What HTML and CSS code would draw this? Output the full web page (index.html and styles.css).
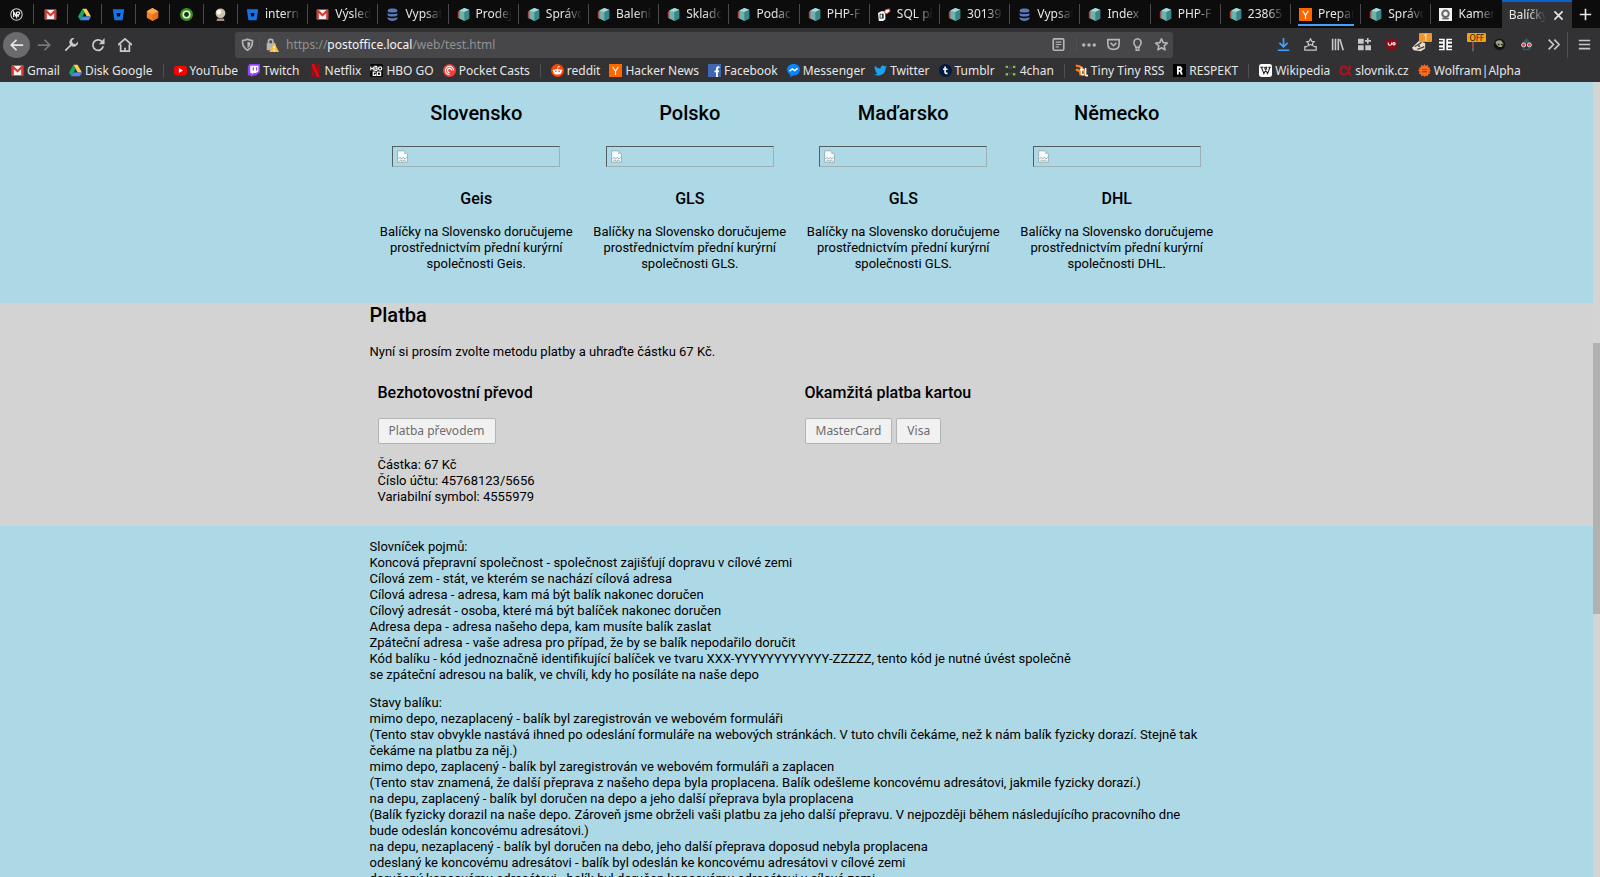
FILE: index.html
```
<!DOCTYPE html>
<html lang="cs">
<head>
<meta charset="utf-8">
<title>Balíčky</title>
<link rel="stylesheet" href="styles.css">
</head>
<body>
<svg class="sprite" aria-hidden="true">
  <symbol id="gmail" viewBox="0 0 16 16"><path fill="#f2f2f2" d="M1 2h14v12H1z"/><path fill="#d93a30" d="M1 2h2l5 5 5-5h2v12h-2.500V6.500L8 10.500l-4.500-4V14H1z"/></symbol>
  <symbol id="drive" viewBox="0 0 16 16"><path fill="#16a765" d="M5.500 1L0 10.500 2.700 15l5.300-9z"/><path fill="#ffcf48" d="M5.500 1h5L16 10.500h-5.200z"/><path fill="#4688f4" d="M5.400 10.500H16L13.400 15H2.700z"/></symbol>
  <symbol id="bucket" viewBox="0 0 16 16"><path fill="#1673e6" fill-rule="evenodd" d="M1 1.500h14L13 15H3zM5.500 6l.8 4.500h3.400l.8-4.500z"/></symbol>
  <symbol id="hex" viewBox="0 0 16 16"><path fill="#f58220" d="M8 0l7 4v8l-7 4-7-4V4z"/><path fill="#ffab4d" d="M8 0l7 4-7 4-7-4z"/><path fill="#e8701a" d="M8 8l7-4v8l-7 4z"/></symbol>
  <symbol id="ring" viewBox="0 0 16 16"><circle cx="8" cy="8" r="8" fill="#3d8f22"/><circle cx="8" cy="8" r="4" fill="#123312" stroke="#e6f5dc" stroke-width="2"/></symbol>
  <symbol id="globe" viewBox="0 0 16 16"><circle cx="8" cy="6.500" r="6" fill="#c9c3ae"/><circle cx="6" cy="5" r="3" fill="#fffdf0"/><path fill="#9b927c" d="M4 13h8l1 3H3z"/></symbol>
  <symbol id="wp" viewBox="0 0 16 16"><circle cx="8" cy="8" r="7" fill="none" stroke="#d6d6d6" stroke-width="1.300"/><path d="M4.500 11V5l3.500 6V5M8 5h3q2 2-1 3.500H8l3 2" fill="none" stroke="#eee" stroke-width="1.600"/></symbol>
  <symbol id="db" viewBox="0 0 16 16"><g fill="#5b79b8"><path d="M2 3c0-3 12-3 12 0v1c0 2-12 2-12 0z"/><path d="M2 6c2 2 10 2 12 0v3c-1 2-11 2-12 0z"/><path d="M2 11c2 2 10 2 12 0v2c-1 4-11 4-12 0z"/></g></symbol>
  <symbol id="box" viewBox="0 0 16 16"><path fill="#b8483e" d="M1 5l3-3v12l-3-2z"/><path fill="#6fb3b0" d="M3 3l6-3 6 2v11l-6 3-6-3z"/><path fill="#a9dbd6" d="M3 3l6-3 6 2-6 3z"/><path fill="#3a8788" d="M9 5l6-3v11l-6 3z"/></symbol>
  <symbol id="sql" viewBox="0 0 16 16"><path fill="#fff" d="M0 6l4-2h5v10l-3 2H1z"/><path fill="#27333b" d="M2 7h5v6H2z"/><path fill="#d7f1ff" d="M3 8h2v4H3z"/><path fill="#fff" stroke="#c83232" d="M9 2l5-1 1 3-4 3-3-1z"/></symbol>
  <symbol id="hn" viewBox="0 0 16 16"><path fill="#ff6600" d="M0 0h16v16H0z"/><path d="M4.500 3.500L8 9l3.500-5.500M8 9v4.500" fill="none" stroke="#fff" stroke-width="1.400"/></symbol>
  <symbol id="cam" viewBox="0 0 16 16"><path fill="#f4f4f4" d="M0 0h16v16H0z"/><circle cx="8" cy="7" r="4" fill="none" stroke="#666" stroke-width="2.500"/><path fill="#666" d="M4 12h8v2H4z"/></symbol>
  <symbol id="yt" viewBox="0 0 16 16"><rect y="2" width="16" height="12" rx="4" fill="#f00"/><path fill="#fff" d="M6 5l5 3-5 3z"/></symbol>
  <symbol id="twitch" viewBox="0 0 16 16"><path fill="#9146ff" d="M3 0h13v10l-5 4H8l-3 2v-2H1V3z"/><path fill="#fff" d="M4 2h10v7l-3 2H8l-2 2v-2H4z"/><path fill="#9146ff" d="M7 4h1.500v4H7zM11 4h1.500v4H11z"/></symbol>
  <symbol id="netflix" viewBox="0 0 16 16"><path fill="#a90a13" d="M3 0h3.500v16H3zM9.500 0H13v16H9.500z"/><path fill="#e50914" d="M3 0h3.500L13 16H9.500z"/></symbol>
  <symbol id="hbo" viewBox="0 0 16 16"><rect width="16" height="16" rx="2" fill="#090909"/><path d="M1 3v5M4 3v5M1 5.500h3M6 3v5h2q2-1 0-2.500Q9.500 4 8 3z" fill="none" stroke="#fff" stroke-width="1.400"/><circle cx="12.500" cy="5.500" r="2" fill="none" stroke="#fff" stroke-width="1.500"/><path d="M7 10H4v4h3v-2M9 10h4v4H9z" fill="none" stroke="#fff" stroke-width="1.500"/></symbol>
  <symbol id="casts" viewBox="0 0 16 16"><circle cx="8" cy="8" r="8" fill="#f43e37"/><path d="M8 13a5 5 0 1 1 5-5M8 10.500A2.500 2.500 0 1 1 10.500 8" fill="none" stroke="#fff" stroke-width="1.600"/></symbol>
  <symbol id="reddit" viewBox="0 0 16 16"><circle cx="8" cy="8" r="8" fill="#ff4500"/><ellipse cx="8" cy="9.500" rx="5" ry="3.500" fill="#fff"/><circle cx="3.500" cy="8" r="1.300" fill="#fff"/><circle cx="12.500" cy="8" r="1.300" fill="#fff"/><path d="M8 6l1-3 2 .5" fill="none" stroke="#fff"/><circle cx="6" cy="9" r="1" fill="#ff4500"/><circle cx="10" cy="9" r="1" fill="#ff4500"/></symbol>
  <symbol id="fb" viewBox="0 0 16 16"><path fill="#4267b2" d="M0 0h16v16H0z"/><path d="M14 4h-1.500Q11 4 11 6v10M8 9h5.500" fill="none" stroke="#fff" stroke-width="2.300"/></symbol>
  <symbol id="msgr" viewBox="0 0 16 16"><path fill="#0a84ff" d="M8 0c11 0 10 14 0 14l-4 2v-3C-3 9 0 0 8 0z"/><path d="M3 9l3.500-3 3 2L13 5.500" fill="none" stroke="#fff" stroke-width="1.800"/></symbol>
  <symbol id="twitter" viewBox="0 0 16 16"><path fill="#1da1f2" d="M1 2q3 3.500 7 3.500C8 1 12 1 13.500 3L16 2.500 14.500 5C14 14 5 16 0 13q3 0 4.500-1.500Q2 11 1.500 9H3Q0 7 1 2z"/></symbol>
  <symbol id="tumblr" viewBox="0 0 16 16"><circle cx="8" cy="8" r="8" fill="#001b3d"/><path d="M7.500 3v7q0 2 3 1.500M5 6.500h5.500" fill="none" stroke="#fff" stroke-width="2"/></symbol>
  <symbol id="chan" viewBox="0 0 16 16"><g fill="#75c52d"><path d="M2 2h3v3H2zM11 2h3v3h-3zM2 11h3v3H2zM11 11h3v3h-3z"/></g><path fill="#39761a" d="M6 3h1v3H6zM9 3h1v3H9zM6 10h1v3H6zM9 10h1v3H9z"/></symbol>
  <symbol id="rss" viewBox="0 0 16 16"><path d="M1 2q10 0 11 12M1 7q6 0 6 7" fill="none" stroke="#ff7b16" stroke-width="3"/><path d="M8 4v7q0 3 3 2M6 7h5M13 5v8q0 2 3 1" fill="none" stroke="#fff" stroke-width="2"/></symbol>
  <symbol id="respekt" viewBox="0 0 16 16"><path fill="#000" d="M0 0h16v16H0z"/><path d="M6 13V4h3q3 2 0 4.500H6M9 8l2 5" fill="none" stroke="#fff" stroke-width="2.200"/></symbol>
  <symbol id="wiki" viewBox="0 0 16 16"><rect width="16" height="16" rx="3" fill="#fff"/><path d="M1.500 4h4M7 4h3M11.500 4h3M3 4l3 8 4-8M6.500 4l4 8L13.500 4" fill="none" stroke="#222" stroke-width="1.300"/></symbol>
  <symbol id="alpha" viewBox="0 0 16 16"><path d="M14 2q-2 11-8 11-4 0-4-5t4-5q5 0 7 10h2" fill="none" stroke="#b3101c" stroke-width="2.600"/></symbol>
  <symbol id="wolfram" viewBox="0 0 16 16"><path fill="#f96a1a" d="M8 0l1.500 2.500L12 1l.5 3L15 4.500 14 7l2 1-2 1.500 1 2.500-2.500.5L12 15l-2.500-1L8 16l-1.500-2L4 15l-.5-2.500L1 12l1-2.500L0 8l2-1.500L1 4.500 3.500 4 4 1l2.500 1.500z"/><path fill="#8a3a10" d="M5 6h6v1H5zM5 9h6v1H5z"/></symbol>
  <symbol id="back" viewBox="0 0 16 16"><path d="M15 8H2M7.500 2L1.500 8l6 6"/></symbol>
  <symbol id="forward" viewBox="0 0 16 16"><path d="M1 8h13M8.500 2l6 6-6 6"/></symbol>
  <symbol id="wrench" viewBox="0 0 16 16"><path d="M1.500 14.500L9 7"/><path fill="currentColor" stroke="none" d="M12 0a5 5 0 1 0 4 4l-3 3-3-1-1-3z"/></symbol>
  <symbol id="reload" viewBox="0 0 16 16"><path d="M13 4.500A6 6 0 1 0 14 9.500"/><path fill="currentColor" stroke="none" d="M15.500 0v7H9z"/></symbol>
  <symbol id="home" viewBox="0 0 16 16"><path d="M0 8l8-7 8 7M3 7v8h10V7M8 15v-4"/></symbol>
  <symbol id="shield" viewBox="0 0 16 16"><path d="M8 1.500q3 1.500 6 1.500 1 8-6 12Q1 11 2 3q3 0 6-1.500z"/><path fill="currentColor" stroke="none" d="M8 4.500l3.500 1Q12 10 8 12.500z"/></symbol>
  <symbol id="lock" viewBox="0 0 16 16"><path d="M4 7V4q0-2.500 2.500-2.500T9 4v3"/><path fill="currentColor" stroke="none" d="M2 6h10v8H2z"/><path fill="#ffbf26" stroke="none" d="M10.500 5L16 16H5z"/><path stroke="#fff" stroke-width="1.500" d="M10.500 9v3M10.500 13.500V15"/></symbol>
  <symbol id="reader" viewBox="0 0 16 16"><rect x="1.500" y="1" width="13" height="14" rx="1.500"/><path stroke-width="1.500" d="M4.500 5h7M4.500 8h7M4.500 11h4"/></symbol>
  <symbol id="dots" viewBox="0 0 16 16"><g fill="currentColor" stroke="none"><circle cx="2" cy="8" r="2"/><circle cx="8" cy="8" r="2"/><circle cx="14" cy="8" r="2"/></g></symbol>
  <symbol id="pocket" viewBox="0 0 16 16"><path d="M1 2h14v5q0 7-7 7T1 7zM4.500 6L8 9.500 11.500 6"/></symbol>
  <symbol id="bulb" viewBox="0 0 16 16"><path d="M6 11.500q0-1.500-2-3.500-1.500-6.500 4-7 5.500.5 4 7-2 2-2 3.500zM6.500 13v2.500h3V13"/></symbol>
  <symbol id="star" viewBox="0 0 16 16"><path stroke-linejoin="round" d="M8 1l2.100 4.700 5 .5-3.800 3.400 1.100 5L8 12l-4.400 2.600 1.100-5L.9 6.200l5-.5z"/></symbol>
  <symbol id="download" viewBox="0 0 16 16"><path d="M8 0v11M3 6l5 5 5-5M1 15h14"/></symbol>
  <symbol id="tray" viewBox="0 0 16 16"><path stroke-width="1.500" d="M8 1l1.500 3 3 .5-2 2 .5 3L8 8l-3 1.500.5-3-2-2 3-.5zM4 10.500H1V15h14v-4.500h-3"/></symbol>
  <symbol id="library" viewBox="0 0 16 16"><path d="M2 1v14M5.500 1v14M9 1v14M11 1.500L15 15"/></symbol>
  <symbol id="tiles" viewBox="0 0 16 16"><path fill="currentColor" stroke="none" d="M0 1h7v6H0zM0 9h7v6H0zM9 9h7v6H9zM11 0h2v2.500h3v2h-3V7h-2V4.500H8.500v-2H11z"/></symbol>
  <symbol id="ublock" viewBox="0 0 16 16"><path fill="#8c0d19" stroke="none" d="M8 0q3 2 7 2v6q-1 5-7 8-6-3-7-8V2Q5 2 8 0z"/><path stroke="#fff" stroke-width="1.300" d="M4 5.500v2q0 1.500 2 1.500T8 7.500v-2"/><circle cx="11" cy="7.200" r="1.500" stroke="#fff" stroke-width="1.300"/></symbol>
  <symbol id="badger" viewBox="0 0 16 16"><path fill="#e8e0d1" stroke="none" d="M0 11l8-8 7 3v6l-5 3-8-1z"/><path stroke="#5a4c42" stroke-width="1.600" d="M3 10l8-5M6 13l8-3"/><circle cx="8" cy="9" r="1" fill="#111" stroke="none"/></symbol>
  <symbol id="grid" viewBox="0 0 16 16"><path fill="#fff" stroke="none" d="M0 1h7v14H0zM9 1h7v14H9z"/><path stroke="#111" stroke-width="1.600" d="M0 3.500h5M0 8h5M0 12.500h5M11 3.500h5M11 8h5M11 12.500h5"/></symbol>
  <symbol id="flag" viewBox="0 0 16 16"><path stroke="#a8483f" d="M8 2v9"/><path stroke="#777" stroke-width="1.500" d="M8 11v4"/></symbol>
  <symbol id="skull" viewBox="0 0 16 16"><circle cx="8" cy="8" r="7.500" fill="#11140e" stroke="#34372b" stroke-width="1"/><path fill="#a3a184" stroke="none" d="M3 6q1-4 7-3l3 4-2 4H7L5 9z"/><path fill="#171913" stroke="none" d="M6 7h2v2H6zM10 7h2v2h-2z"/></symbol>
  <symbol id="spy" viewBox="0 0 16 16"><path fill="#2d5f63" stroke="none" d="M8 0l5 6H3zM2 11q6 5 12 0l-2 4H4z"/><circle cx="4.500" cy="8.500" r="2.500" fill="#e8434c" stroke="#ddd" stroke-width="1.200"/><circle cx="11.500" cy="8.500" r="2.500" fill="#e8434c" stroke="#ddd" stroke-width="1.200"/></symbol>
  <symbol id="more" viewBox="0 0 16 16"><path d="M2 2l6 6-6 6M9 2l6 6-6 6"/></symbol>
  <symbol id="menu" viewBox="0 0 16 16"><path d="M1 3h14M1 8h14M1 13h14"/></symbol>
  <symbol id="close" viewBox="0 0 16 16"><path d="M3 3l10 10M13 3L3 13"/></symbol>
  <symbol id="plus" viewBox="0 0 16 16"><path d="M8 1v14M1 8h14"/></symbol>
  <symbol id="broken" viewBox="0 0 16 16"><path fill="#f7fbfc" stroke="#8fa4aa" d="M2 1h8l4 4v10H2z"/><path fill="#b7c9ce" d="M10 1v4h4z"/><path d="M3 11l2-2 2 2 2-2 2 2 2-2M4 14l2-2 2 2 2-2 2 2" fill="none" stroke="#8a9b9f"/></symbol>
</svg>

<div class="browser">
  <header class="chrome">
    <nav class="tabs" aria-label="Panely">
      <button class="tab pinned" aria-label="WP"><svg class="fav"><use href="#wp"/></svg></button>
      <button class="tab pinned" aria-label="Gmail"><svg class="fav"><use href="#gmail"/></svg></button>
      <button class="tab pinned" aria-label="Disk"><svg class="fav"><use href="#drive"/></svg></button>
      <button class="tab pinned" aria-label="Bitbucket"><svg class="fav"><use href="#bucket"/></svg></button>
      <button class="tab pinned" aria-label="Balík"><svg class="fav"><use href="#hex"/></svg></button>
      <button class="tab pinned" aria-label="Stav"><svg class="fav"><use href="#ring"/></svg></button>
      <button class="tab pinned" aria-label="Glóbus"><svg class="fav"><use href="#globe"/></svg></button>
      <button class="tab"><svg class="fav"><use href="#bucket"/></svg><span class="label">intern</span></button>
      <button class="tab"><svg class="fav"><use href="#gmail"/></svg><span class="label">Výsled</span></button>
      <button class="tab"><svg class="fav"><use href="#db"/></svg><span class="label">Vypsat</span></button>
      <button class="tab"><svg class="fav"><use href="#box"/></svg><span class="label">Prodej</span></button>
      <button class="tab"><svg class="fav"><use href="#box"/></svg><span class="label">Správc</span></button>
      <button class="tab"><svg class="fav"><use href="#box"/></svg><span class="label">Balení</span></button>
      <button class="tab"><svg class="fav"><use href="#box"/></svg><span class="label">Sklado</span></button>
      <button class="tab"><svg class="fav"><use href="#box"/></svg><span class="label">Podac</span></button>
      <button class="tab"><svg class="fav"><use href="#box"/></svg><span class="label">PHP-F</span></button>
      <button class="tab"><svg class="fav"><use href="#sql"/></svg><span class="label">SQL př</span></button>
      <button class="tab"><svg class="fav"><use href="#box"/></svg><span class="label">30139</span></button>
      <button class="tab"><svg class="fav"><use href="#db"/></svg><span class="label">Vypsat</span></button>
      <button class="tab"><svg class="fav"><use href="#box"/></svg><span class="label">Index o</span></button>
      <button class="tab"><svg class="fav"><use href="#box"/></svg><span class="label">PHP-F</span></button>
      <button class="tab"><svg class="fav"><use href="#box"/></svg><span class="label">23865</span></button>
      <button class="tab marked"><svg class="fav"><use href="#hn"/></svg><span class="label">Prepar</span></button>
      <button class="tab"><svg class="fav"><use href="#box"/></svg><span class="label">Správc</span></button>
      <button class="tab last"><svg class="fav"><use href="#cam"/></svg><span class="label">Kamer</span></button>
      <button class="tab active"><span class="label">Balíčky</span><svg class="line small"><use href="#close"/></svg></button>
      <button class="new-tab" aria-label="Nový panel"><svg class="line small"><use href="#plus"/></svg></button>
    </nav>

    <div class="toolbar">
      <div class="tools">
        <button class="tool round" aria-label="Zpět"><svg class="line"><use href="#back"/></svg></button>
        <button class="tool dim" aria-label="Vpřed"><svg class="line"><use href="#forward"/></svg></button>
        <button class="tool" aria-label="Nástroje"><svg class="line"><use href="#wrench"/></svg></button>
        <button class="tool" aria-label="Obnovit"><svg class="line"><use href="#reload"/></svg></button>
        <button class="tool" aria-label="Domů"><svg class="line"><use href="#home"/></svg></button>
      </div>
      <div class="address">
        <button class="tool" aria-label="Ochrana"><svg class="line small"><use href="#shield"/></svg></button>
        <i class="rule"></i>
        <button class="tool" aria-label="Zabezpečení"><svg class="line"><use href="#lock"/></svg></button>
        <div class="url" role="textbox" contenteditable="true" spellcheck="false" aria-label="Adresa">https://<b>postoffice.local</b>/web/test.html</div>
        <button class="tool reader" aria-label="Čtečka"><svg class="line small"><use href="#reader"/></svg></button>
        <i class="rule"></i>
        <button class="tool" aria-label="Akce"><svg class="line"><use href="#dots"/></svg></button>
        <button class="tool" aria-label="Pocket"><svg class="line small"><use href="#pocket"/></svg></button>
        <button class="tool" aria-label="Tip"><svg class="line small"><use href="#bulb"/></svg></button>
        <button class="tool" aria-label="Záložka"><svg class="line small"><use href="#star"/></svg></button>
      </div>
      <div class="tools">
        <button class="tool blue" aria-label="Stahování"><svg class="line small"><use href="#download"/></svg></button>
        <button class="tool" aria-label="Záložky"><svg class="line small"><use href="#tray"/></svg></button>
        <button class="tool" aria-label="Knihovna"><svg class="line small"><use href="#library"/></svg></button>
        <button class="tool" aria-label="Kontejnery"><svg class="line small"><use href="#tiles"/></svg></button>
        <button class="tool" aria-label="Blokování"><svg class="line small"><use href="#ublock"/></svg></button>
        <button class="tool" aria-label="Sledování"><svg class="line"><use href="#badger"/></svg><span class="badge">1</span></button>
        <button class="tool" aria-label="Mřížka"><svg class="line small"><use href="#grid"/></svg></button>
        <button class="tool" aria-label="Vypnuto"><svg class="line"><use href="#flag"/></svg><span class="badge off">OFF</span></button>
        <button class="tool" aria-label="Lebka"><svg class="line small"><use href="#skull"/></svg></button>
        <button class="tool" aria-label="Maska"><svg class="line small"><use href="#spy"/></svg></button>
        <button class="tool" aria-label="Další"><svg class="line small"><use href="#more"/></svg></button>
        <i class="rule tall"></i>
        <button class="tool menu" aria-label="Nabídka"><svg class="line small"><use href="#menu"/></svg></button>
      </div>
    </div>

    <nav class="bookmarks" aria-label="Záložky">
      <a href="#"><svg class="fav"><use href="#gmail"/></svg>Gmail</a>
      <a href="#"><svg class="fav"><use href="#drive"/></svg>Disk Google</a>
      <i class="rule"></i>
      <a href="#"><svg class="fav"><use href="#yt"/></svg>YouTube</a>
      <a href="#"><svg class="fav"><use href="#twitch"/></svg>Twitch</a>
      <a href="#"><svg class="fav"><use href="#netflix"/></svg>Netflix</a>
      <a href="#"><svg class="fav"><use href="#hbo"/></svg>HBO GO</a>
      <a href="#"><svg class="fav"><use href="#casts"/></svg>Pocket Casts</a>
      <i class="rule"></i>
      <a href="#"><svg class="fav"><use href="#reddit"/></svg>reddit</a>
      <a href="#"><svg class="fav"><use href="#hn"/></svg>Hacker News</a>
      <a href="#"><svg class="fav"><use href="#fb"/></svg>Facebook</a>
      <a href="#"><svg class="fav"><use href="#msgr"/></svg>Messenger</a>
      <a href="#"><svg class="fav"><use href="#twitter"/></svg>Twitter</a>
      <a href="#"><svg class="fav"><use href="#tumblr"/></svg>Tumblr</a>
      <a href="#"><svg class="fav"><use href="#chan"/></svg>4chan</a>
      <i class="rule"></i>
      <a href="#"><svg class="fav"><use href="#rss"/></svg>Tiny Tiny RSS</a>
      <a href="#"><svg class="fav"><use href="#respekt"/></svg>RESPEKT</a>
      <i class="rule"></i>
      <a href="#"><svg class="fav"><use href="#wiki"/></svg>Wikipedia</a>
      <a href="#"><svg class="fav"><use href="#alpha"/></svg>slovnik.cz</a>
      <a href="#"><svg class="fav"><use href="#wolfram"/></svg>Wolfram|Alpha</a>
    </nav>
  </header>

  <div class="viewport">
    <main class="page">
      <section class="carriers">
        <div class="wrap countries">
          <article class="country"><h2>Slovensko</h2><div class="photo" role="img" aria-label="Geis"><svg class="fav"><use href="#broken"/></svg></div><h3>Geis</h3><p>Balíčky na Slovensko doručujeme<br>prostřednictvím přední kurýrní<br>společnosti Geis.</p></article>
          <article class="country"><h2>Polsko</h2><div class="photo" role="img" aria-label="GLS"><svg class="fav"><use href="#broken"/></svg></div><h3>GLS</h3><p>Balíčky na Slovensko doručujeme<br>prostřednictvím přední kurýrní<br>společnosti GLS.</p></article>
          <article class="country"><h2>Maďarsko</h2><div class="photo" role="img" aria-label="GLS"><svg class="fav"><use href="#broken"/></svg></div><h3>GLS</h3><p>Balíčky na Slovensko doručujeme<br>prostřednictvím přední kurýrní<br>společnosti GLS.</p></article>
          <article class="country"><h2>Německo</h2><div class="photo" role="img" aria-label="DHL"><svg class="fav"><use href="#broken"/></svg></div><h3>DHL</h3><p>Balíčky na Slovensko doručujeme<br>prostřednictvím přední kurýrní<br>společnosti DHL.</p></article>
        </div>
      </section>

      <section class="payment">
        <div class="wrap">
          <h2>Platba</h2>
          <p class="lead">Nyní si prosím zvolte metodu platby a uhraďte částku 67 Kč.</p>
          <div class="methods">
            <div class="method">
              <h3>Bezhotovostní převod</h3>
              <div class="actions"><button class="pay">Platba převodem</button></div>
              <p>Částka: 67 Kč<br>Číslo účtu: 45768123/5656<br>Variabilní symbol: 4555979</p>
            </div>
            <div class="method">
              <h3>Okamžitá platba kartou</h3>
              <div class="actions"><button class="pay">MasterCard</button><button class="pay">Visa</button></div>
            </div>
          </div>
        </div>
      </section>

      <section class="glossary">
        <div class="wrap">
          <p>Slovníček pojmů:<br>
          Koncová přepravní společnost - společnost zajišťují dopravu v cílové zemi<br>
          Cílová zem - stát, ve kterém se nachází cílová adresa<br>
          Cílová adresa - adresa, kam má být balík nakonec doručen<br>
          Cílový adresát - osoba, které má být balíček nakonec doručen<br>
          Adresa depa - adresa našeho depa, kam musíte balík zaslat<br>
          Zpáteční adresa - vaše adresa pro případ, že by se balík nepodařilo doručit<br>
          Kód balíku - kód jednoznačně identifikující balíček ve tvaru XXX-YYYYYYYYYYYY-ZZZZZ, tento kód je nutné úvést společně<br>
          se zpáteční adresou na balík, ve chvíli, kdy ho posíláte na naše depo</p>
          <p>Stavy balíku:<br>
          mimo depo, nezaplacený - balík byl zaregistrován ve webovém formuláři<br>
          (Tento stav obvykle nastává ihned po odeslání formuláře na webových stránkách. V tuto chvíli čekáme, než k nám balík fyzicky dorazí. Stejně tak<br>
          čekáme na platbu za něj.)<br>
          mimo depo, zaplacený - balík byl zaregistrován ve webovém formuláři a zaplacen<br>
          (Tento stav znamená, že další přeprava z našeho depa byla proplacena. Balík odešleme koncovému adresátovi, jakmile fyzicky dorazí.)<br>
          na depu, zaplacený - balík byl doručen na depo a jeho další přeprava byla proplacena<br>
          (Balík fyzicky dorazil na naše depo. Zároveň jsme obrželi vaši platbu za jeho další přepravu. V nejpozději během následujícího pracovního dne<br>
          bude odeslán koncovému adresátovi.)<br>
          na depu, nezaplacený - balík byl doručen na debo, jeho další přeprava doposud nebyla proplacena<br>
          odeslaný ke koncovému adresátovi - balík byl odeslán ke koncovému adresátovi v cílové zemi<br>
          doručený koncovému adresátovi - balík byl doručen koncovému adresátovi v cílové zemi</p>
        </div>
      </section>
    </main>
    <div class="scrollbar"><div class="thumb"></div></div>
  </div>
</div>
</body>
</html>
```

FILE: styles.css
```
* { box-sizing: border-box; }
body { margin: 0; font: 13px/16px Roboto, "Noto Sans", sans-serif; color: #000; }
h2, h3, p { margin: 0; }
button { border: 0; padding: 0; background: none; color: inherit; font: inherit; }
.sprite { position: absolute; width: 0; height: 0; }
.browser { display: flex; flex-direction: column; height: 100vh; overflow: hidden; }

.chrome { flex: none; background: #323234; color: #e6e6e7; font: 12px/16px "Noto Sans", "Open Sans", sans-serif; }
.fav { flex: none; width: 13px; height: 13px; }
.line { flex: none; width: 14px; height: 14px; fill: none; stroke: currentColor; stroke-width: 2; overflow: visible; }
.line.small { width: 13px; height: 13px; }
.rule { flex: none; width: 1px; height: 14px; background: #505052; }
.rule.tall { height: 26px; }

.tabs { display: flex; height: 28px; background: #0c0c0d; }
.tab { display: flex; flex: 1 1 70px; align-items: center; gap: 6px; min-width: 0; padding: 0 1px 0 8px; position: relative; }
.tab.pinned { flex: none; width: 34px; padding: 0 10px; }
.tab::after { content: ""; position: absolute; right: 0; top: 4px; bottom: 4px; width: 1px; background: #4a4a4c; }
.tab.last::after, .tab.active::after { display: none; }
.label { flex: 1; min-width: 0; overflow: hidden; white-space: nowrap; text-align: left; mask-image: linear-gradient(90deg, #000 45%, transparent 86%); }
.tab.marked::before { content: ""; position: absolute; left: 7px; right: 7px; bottom: 2px; height: 2px; background: #45a1ff; }
.tab.active { background: #323234; border-top: 2px solid #0a62d0; gap: 0; padding: 0 7px; }
.new-tab { display: flex; width: 28px; align-items: center; justify-content: center; }

.toolbar { display: flex; align-items: center; height: 33px; padding-left: 3px; gap: 97px; color: #c8c8ca; }
.tools { display: flex; align-items: center; }
.tool { display: flex; flex: none; width: 27px; height: 26px; align-items: center; justify-content: center; position: relative; }
.tool.round { background: #6b6b6d; border-radius: 50%; color: #e6e6e7; }
.tool.dim { color: #77777a; }
.tool.blue { color: #45a1ff; }
.tool.menu { width: 32px; }
.badge { position: absolute; top: 1px; right: 0; padding: 0 4px; background: #f29430; color: #fff; font-size: 8px; line-height: 9px; border-radius: 1px; }
.badge.off { padding: 0 2px; background: #f0a30a; color: #222; }
.address { display: flex; flex: 1; align-items: center; height: 26px; background: #474749; border-radius: 3px; color: #b5b5b7; }
.address .tool { width: 24px; }
.address .reader { width: 36px; }
.url { flex: 1; padding-left: 2px; color: #919193; white-space: nowrap; outline: 0; }
.url b { color: #f4f4f5; font-weight: 400; }

.bookmarks { display: flex; align-items: center; height: 21px; padding: 0 11px 2px; gap: 9px; white-space: nowrap; }
.bookmarks a { display: flex; align-items: center; gap: 3px; color: inherit; text-decoration: none; }
.bookmarks .rule { margin: 0 1px; }

.viewport { display: flex; flex: 1; min-height: 0; overflow: hidden; }
.page { flex: 1; background: lightblue; overflow: hidden; }
.scrollbar { width: 7px; padding-top: 261px; background: #d4d4d4; }
.thumb { height: 271px; background: #b1b1b1; }
.wrap { width: 100%; max-width: 854px; margin: 0 auto; }
h2 { font-size: 20px; line-height: 24px; font-weight: 500; }
h3 { font-size: 16px; line-height: 20px; font-weight: 500; }

.carriers { padding: 19px 0 31px; }
.countries { display: grid; grid-template-columns: repeat(4, 1fr); }
.country { display: flex; flex-direction: column; align-items: center; text-align: center; }
.photo { display: flex; align-items: center; width: 168px; height: 21px; margin: 21px 0 22px; padding-left: 3px; border: 1px inset #9db0b5; }
.country p { margin-top: 15px; white-space: nowrap; }

.payment { padding-bottom: 21px; background: lightgray; }
.lead { padding: 17px 0 23px; }
.methods { display: grid; grid-template-columns: 1fr 1fr; }
.method { padding-left: 8px; }
.actions { display: flex; gap: 4px; padding: 15px 0 13px; }
.pay { height: 26px; padding: 0 10px; border: 1px solid #b3b3b3; border-radius: 2px; background: #f1f1f1; color: #6d6d6d; font: 12px/16px "Noto Sans", "Open Sans", sans-serif; }

.glossary { padding-top: 13px; }
.glossary p { margin-bottom: 12px; white-space: nowrap; }
```
